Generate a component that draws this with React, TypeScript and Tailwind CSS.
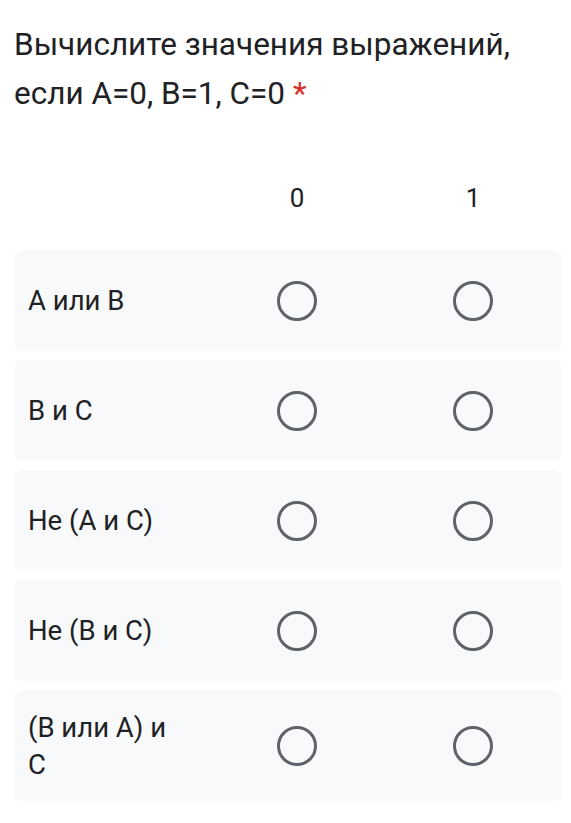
const rows = ['А или В', 'В и С', 'Не (А и С)', 'Не (В и С)', '(В или А) и С'];

function Radio() {
  return (
    <div className="flex justify-center">
      <div className="w-[40px] h-[40px] rounded-full border-[3.5px] border-[#5f6368]" />
    </div>
  );
}

export default function App() {
  return (
    <div className="w-[571px] min-h-[823px] bg-white text-[#202124]" style={{ fontFamily: 'Roboto, "Noto Sans", sans-serif' }}>
      <div className="pl-[14px] pr-[9px] pt-[20px]">
        <h1 className="text-[31.5px] leading-[49px] font-normal">
          Вычислите значения выражений, если А=0, В=1, С=0 <span className="text-[#d93025]">*</span>
        </h1>
      </div>

      <div className="pl-[14px] pr-[9px] mt-[60px]">
        <div className="grid grid-cols-[181px_176px_176px] pl-[14px] h-[40px] items-center text-[26px]">
          <div />
          <div className="text-center">0</div>
          <div className="text-center">1</div>
        </div>

        <div className="mt-[32px] flex flex-col gap-[9px]">
          {rows.map((label, i) => (
            <div
              key={label}
              className={`grid grid-cols-[181px_176px_176px] items-center pl-[14px] rounded-lg bg-[#f8f9fa] ${i === rows.length - 1 ? 'h-[111px]' : 'h-[101px]'}`}
            >
              <div className="text-[27.5px] leading-[37px] pr-[40px]">{label}</div>
              <Radio />
              <Radio />
            </div>
          ))}
        </div>
      </div>
    </div>
  );
}
